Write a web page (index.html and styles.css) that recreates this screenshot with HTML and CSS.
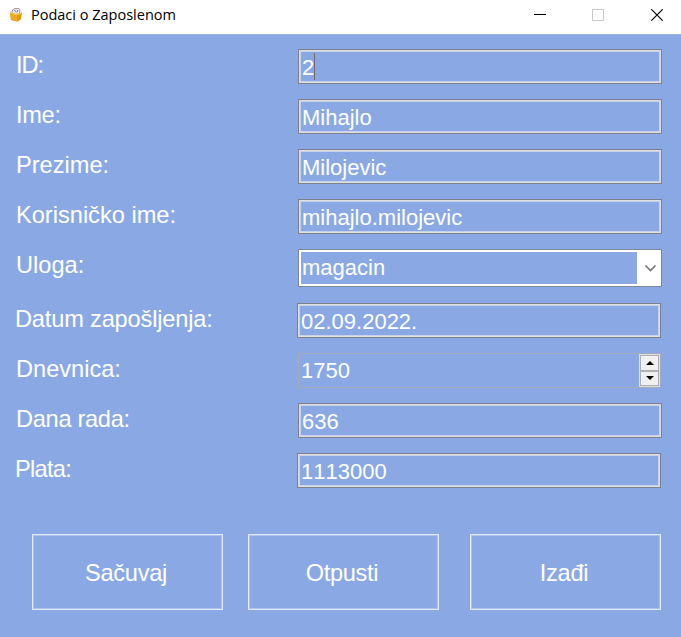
FILE: index.html
```html
<!DOCTYPE html>
<html lang="sr-Latn">
<head>
<meta charset="utf-8">
<title>Podaci o Zaposlenom</title>
<link rel="stylesheet" href="styles.css">
</head>
<body>
<header class="titlebar">
  <svg class="app-icon" width="14" height="16" viewBox="0 0 14 16">
    <path d="M3 7L3.500 3L6 1.500H10L11 3L10.500 7" fill="#eee9ef" stroke="#a896a4"/>
    <path d="M1 5.500L7 7L13 5.500L12 12L9 14.500L2 13Z" fill="#df9714"/>
    <path d="M1 5.500L8 7.500V14.500L2 13Z" fill="#eda924"/>
    <path d="M1.500 6L8 8L12.500 6" fill="none" stroke="#f6c74f"/>
    <path d="M5.500 3L7.500 5.500M9 3L8 5" stroke="#7b6f82"/>
  </svg>
  <span class="caption">Podaci o Zaposlenom</span>
  <div class="controls">
    <svg width="12" height="12" viewBox="0 0 12 12"><path d="M0 5.500H12" stroke="#000"/></svg>
    <svg width="12" height="12" viewBox="0 0 12 12"><path d="M.5.5H11.500V11.500H.5Z" fill="none" stroke="#c8c8c8"/></svg>
    <svg class="close" width="12" height="12" viewBox="0 0 12 12"><path d="M.3.3L11.700 11.700M11.700.3L.3 11.700" stroke="#000" stroke-width="1.200"/></svg>
  </div>
</header>
<main class="window">
  <div class="form">
    <div class="row"><label class="tightest">ID:</label><div class="field"><span>2</span><i class="caret"></i></div></div>
    <div class="row"><label class="tight">Ime:</label><div class="field"><span>Mihajlo</span></div></div>
    <div class="row"><label>Prezime:</label><div class="field"><span>Milojevic</span></div></div>
    <div class="row"><label>Korisničko ime:</label><div class="field"><span>mihajlo.milojevic</span></div></div>
    <div class="row row-combo"><label>Uloga:</label>
      <div class="combo"><span class="combo-value">magacin</span>
        <svg width="24" height="31" viewBox="0 0 24 31"><path d="M8.500 13.500L13.500 18.500L18.500 13.500" fill="none" stroke="#777" stroke-width="1.700"/></svg>
      </div>
    </div>
    <div class="row shifted"><label class="snug">Datum zapošljenja:</label><div class="field"><span>02.09.2022.</span></div></div>
    <div class="row row-spin"><label>Dnevnica:</label>
      <div class="spin"><span class="spin-value">1750</span>
        <div class="spin-buttons">
          <div class="step"><svg width="8" height="4" viewBox="0 0 8 4"><path d="M0 4L4 0L8 4Z"/></svg></div>
          <div class="step"><svg width="8" height="4" viewBox="0 0 8 4"><path d="M0 0L4 4L8 0Z"/></svg></div>
        </div>
      </div>
    </div>
    <div class="row"><label class="tight">Dana rada:</label><div class="field"><span>636</span></div></div>
    <div class="row shifted"><label class="tighter">Plata:</label><div class="field"><span>1113000</span></div></div>
  </div>
  <div class="actions">
    <div class="button">Sačuvaj</div>
    <div class="button">Otpusti</div>
    <div class="button">Izađi</div>
  </div>
</main>
</body>
</html>
```

FILE: styles.css
```css
* { box-sizing: border-box; }
body {
  margin: 0;
  height: 637px;
  overflow: hidden;
  display: flex;
  flex-direction: column;
  background: #8aa9e4;
  font-family: "Liberation Sans", Arial, sans-serif;
  font-kerning: none;
  color: #fff;
}
.titlebar {
  height: 34px;
  flex: none;
  display: flex;
  align-items: center;
  background: #fff;
  color: #000;
  padding: 0 18px 4px 9px;
}
.app-icon { margin-right: 8px; }
.caption { font: 14.500px/20px "Open Sans", "Noto Sans", sans-serif; white-space: nowrap; }
.controls { margin-left: auto; display: flex; gap: 46px; }
.close { margin-left: 1px; }
.window { flex: 1; border-top: 1px solid #9bb3e2; padding: 14px 19px 0 16px; }
.form { display: flex; flex-direction: column; gap: 15px; }
.row { display: grid; grid-template-columns: 282px 364px; height: 35px; }
label { font-size: 23.600px; line-height: 33px; white-space: nowrap; }
.snug { letter-spacing: -.17px; }
.tight { letter-spacing: -.3px; }
.tighter { letter-spacing: -.7px; }
.tightest { letter-spacing: -1px; }
.field {
  display: flex;
  align-items: center;
  border: 1px solid #7b808c;
  box-shadow: inset 0 0 0 1px #dededf, inset 0 0 0 2px #c6d2eb;
  padding: 2px 0 0 3px;
  font-size: 22px;
}
.caret { width: 1px; height: 27px; margin-top: -2px; background: #73696b; }
.row-combo { height: 37px; margin-bottom: 2px; }
.combo {
  display: flex;
  border: 1px solid #7f8795;
  background: #fff;
  padding: 2px 0 2px 2px;
}
.combo-value { flex: 1; background: #8aa9e4; font-size: 22px; line-height: 32px; padding-left: 1px; }
.shifted { margin-left: -1px; }
.spin { display: flex; border: 1px solid #a2abbd; margin-right: 1px; }
.spin-value { flex: 1; font-size: 22px; line-height: 33px; padding-left: 2px; }
.spin-buttons {
  width: 21px;
  padding: 1px;
  display: flex;
  flex-direction: column;
  background: #dedede;
}
.step {
  flex: 1;
  display: flex;
  align-items: center;
  justify-content: center;
  background: #f0f0f0;
  border: 1px solid #b0b0b0;
}
.actions { display: grid; grid-template-columns: 216px 222px 191px; margin: 46px 1px 0 16px; }
.button {
  width: 191px;
  height: 76px;
  border: 1px solid #e1e9f8;
  box-shadow: inset 0 0 0 1px #adc2ec;
  display: flex;
  align-items: center;
  justify-content: center;
  font-size: 23.600px;
  letter-spacing: -.3px;
  padding-top: 2px;
  padding-right: 3px;
}
```
